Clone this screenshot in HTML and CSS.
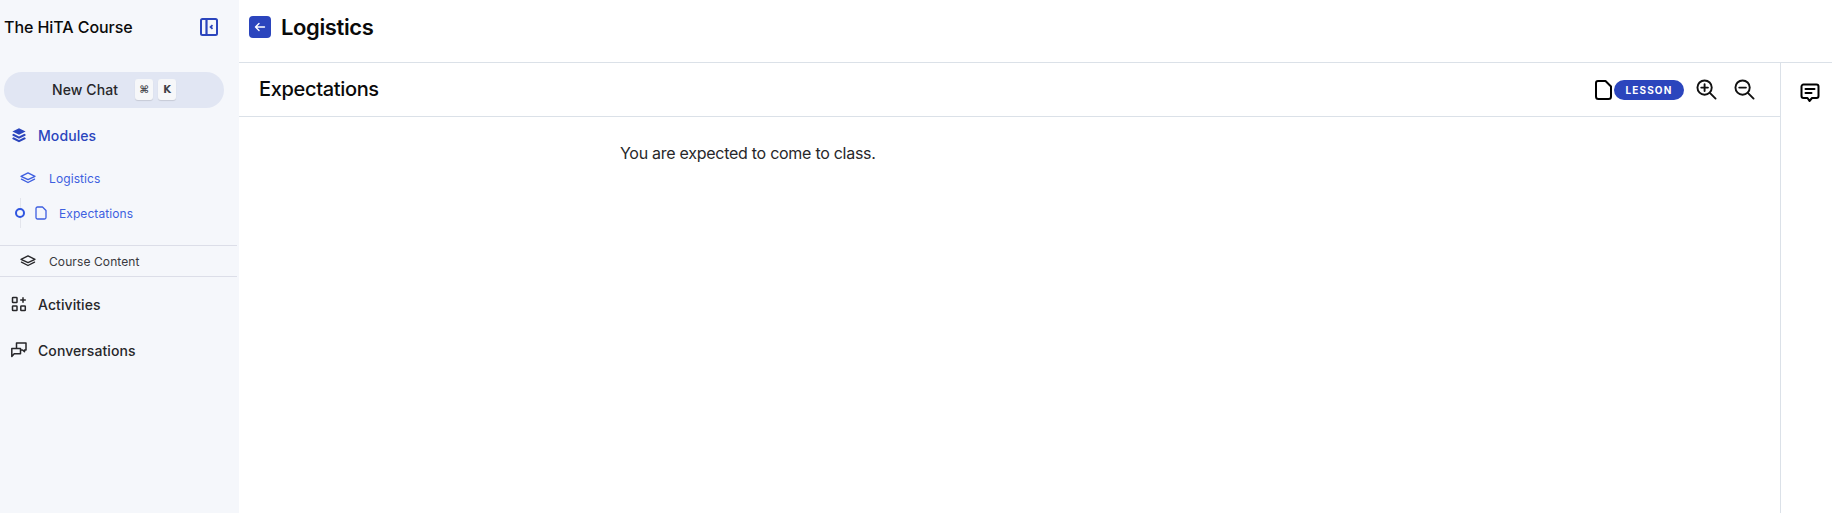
FILE: index.html
```html
<!DOCTYPE html>
<html lang="en">
<head>
<meta charset="utf-8">
<title>Logistics</title>
<link rel="stylesheet" href="styles.css">
</head>
<body>
<div class="app">
  <aside class="sidebar">
    <div class="brand">
      <span class="brand-name">The HiTA Course</span>
      <svg class="collapse" viewBox="0 0 18 18" fill="none" stroke="#2b45bd" stroke-width="2"><rect x="1" y="1" width="16" height="16" rx="1.5"/><path d="M6.5 1v16" stroke-width="2.200"/><path d="M12.500 7.200 10.600 9l1.900 1.800" stroke-width="1.800"/></svg>
    </div>
    <div class="newchat">
      <span class="newchat-label">New Chat</span>
      <kbd class="key">⌘</kbd>
      <kbd class="key">K</kbd>
    </div>
    <div class="nav-row nav-active modules">
      <svg class="nav-icon" viewBox="0 0 16 16" fill="#2b45bd"><path d="M8 1.200 14.600 4.500 8 7.800 1.400 4.500Z"/><path d="M2.600 6.800 8 9.500l5.400-2.700 1.200.7V8.500L8 11.800 1.400 8.500v-1z"/><path d="M2.600 10.300 8 13l5.400-2.700 1.200.7v1L8 15.300 1.400 12v-1z"/></svg>
      <span>Modules</span>
    </div>
    <div class="sub-row sub-active logistics">
      <svg class="sub-icon" viewBox="0 0 16 16" fill="none" stroke="#3e5fe0" stroke-width="1.200" stroke-linejoin="round" stroke-linecap="round"><path d="M8 3.500 14.200 6.500 8 9.500 1.800 6.500Z"/><path d="M2.200 9 8 12l5.800-3"/></svg>
      <span>Logistics</span>
    </div>
    <div class="lesson-row">
      <span class="ring"></span>
      <svg class="doc-small" viewBox="0 0 12 14" fill="none" stroke="#3e5fe0" stroke-width="1.300" stroke-linejoin="round"><path d="M2.500 1H7.500L11 4.500V11.500a1.500 1.500 0 0 1-1.500 1.500h-7A1.500 1.500 0 0 1 1 11.500v-9A1.500 1.500 0 0 1 2.500 1Z"/></svg>
      <span>Expectations</span>
    </div>
    <div class="sub-row course">
      <svg class="sub-icon" viewBox="0 0 16 16" fill="none" stroke="#27272a" stroke-width="1.200" stroke-linejoin="round" stroke-linecap="round"><path d="M8 3.500 14.200 6.500 8 9.500 1.800 6.500Z"/><path d="M2.200 9 8 12l5.800-3"/></svg>
      <span>Course Content</span>
    </div>
    <div class="nav-row activities">
      <svg class="nav-icon" viewBox="0 0 16 16" fill="none" stroke="#27272a" stroke-width="1.500"><rect x="1.500" y="1.500" width="4.500" height="5" rx=".6"/><rect x="1.500" y="10" width="4.500" height="4.500" rx=".6"/><rect x="9.800" y="10" width="4.500" height="4.500" rx=".6"/><path d="M12 1.200v5.600M9.200 4h5.600"/></svg>
      <span>Activities</span>
    </div>
    <div class="nav-row conversations">
      <svg class="nav-icon" viewBox="0 0 16 16" fill="none" stroke="#27272a" stroke-width="1.500" stroke-linejoin="round"><path d="M5.500 6V1H15V8H13.500V9.800L11.500 8H10"/><path d="M.8 6.500H9.500V11.800H3.200L.8 14.500Z"/></svg>
      <span>Conversations</span>
    </div>
  </aside>
  <div class="main">
    <header class="topbar">
      <span class="back">
        <svg viewBox="0 0 22 22" fill="none" stroke="#fff" stroke-width="1.400" stroke-linecap="round" stroke-linejoin="round"><path d="M15.500 11h-9M10 7.500 6.500 11l3.500 3.500"/></svg>
      </span>
      <h1 class="title">Logistics</h1>
    </header>
    <div class="workspace">
      <section class="content">
        <div class="content-head">
          <h2 class="subtitle">Expectations</h2>
          <div class="tools">
            <svg class="doc-large" viewBox="0 0 17 20" fill="none" stroke="#000" stroke-width="2" stroke-linejoin="round"><path d="M3 1H10.500L16 6.500V16.500A2.500 2.500 0 0 1 13.500 19H3.500A2.500 2.500 0 0 1 1 16.500V3A2 2 0 0 1 3 1Z"/></svg>
            <span class="badge">LESSON</span>
            <svg class="zoom zoom-in" viewBox="0 0 22 22" fill="none" stroke="#111" stroke-width="2" stroke-linecap="round"><circle cx="9" cy="9" r="7.500"/><path d="M14.500 14.500 20.500 20.500M5.500 9h7M9 5.500v7"/></svg>
            <svg class="zoom zoom-out" viewBox="0 0 22 22" fill="none" stroke="#111" stroke-width="2" stroke-linecap="round"><circle cx="9" cy="9" r="7.500"/><path d="M14.500 14.500 20.500 20.500M5.500 9h7"/></svg>
          </div>
        </div>
        <p class="body-text">You are expected to come to class.</p>
      </section>
      <aside class="rail">
        <svg class="chat" viewBox="0 0 20 20" fill="none" stroke="#000" stroke-width="2" stroke-linejoin="round" stroke-linecap="round"><path d="M3.500 1.500H16.500A2 2 0 0 1 18.500 3.500V13A2 2 0 0 1 16.500 15H12L9.500 18 7.500 15H3.500A2 2 0 0 1 1.500 13V3.500A2 2 0 0 1 3.500 1.500Z"/><path d="M5.500 6H14.500M5.500 10H11.500"/></svg>
      </aside>
    </div>
  </div>
</div>
</body>
</html>
```
FILE: styles.css
```css
* { box-sizing: border-box; }
html, body { margin: 0; height: 100%; }
body {
  font-family: Inter, "Liberation Sans", sans-serif;
  color: #111;
  background: #fff;
  overflow: hidden;
}
.app { display: flex; height: 513px; }
.sidebar {
  width: 239px;
  flex: none;
  background: #f5f7fb;
  display: flex;
  flex-direction: column;
}
.brand {
  height: 54px;
  display: flex;
  align-items: center;
  justify-content: space-between;
  padding: 0 21px 0 4px;
}
.brand-name { font-size: 16px; font-weight: 500; color: #0a0a0a; letter-spacing: -.07px; }
.collapse { width: 18px; height: 18px; }
.newchat {
  margin: 18px 15px 0 4px;
  height: 36px;
  border-radius: 18px;
  background: #e1e6f3;
  display: flex;
  align-items: center;
  padding: 0 0 1px 48px;
  gap: 5px;
}
.newchat-label { font-size: 14px; font-weight: 500; color: #27272a; margin-right: 12px; letter-spacing: .1px; }
.key {
  width: 18px;
  height: 21px;
  border-radius: 3px;
  background: #f6f7f9;
  box-shadow: 0 1px 1px rgba(0,0,0,.12);
  font-family: "DejaVu Sans", sans-serif;
  font-size: 10px;
  font-weight: 700;
  color: #3f3f46;
  display: flex;
  align-items: center;
  justify-content: center;
}
.nav-row {
  display: flex;
  align-items: center;
  font-size: 14px;
  font-weight: 500;
  letter-spacing: .08px;
  color: #27272a;
  padding-left: 11px;
  gap: 11px;
}
.nav-icon { width: 16px; height: 16px; flex: none; }
.nav-active { color: #2b45bd; }
.modules { margin-top: 18px; height: 18px; }
.sub-row {
  display: flex;
  align-items: center;
  padding-left: 19px;
  gap: 12px;
  font-size: 12px;
  letter-spacing: .1px;
}
.sub-icon { width: 18px; height: 18px; flex: none; }
.sub-active { color: #3e5fe0; }
.logistics { margin-top: 25px; height: 18px; }
.lesson-row {
  margin: 11px 0 0 20px;
  height: 30px;
  border-left: 1px solid #e3e5ec;
  display: flex;
  align-items: center;
  font-size: 12px;
  letter-spacing: .08px;
  color: #3e5fe0;
}
.ring {
  width: 10px;
  height: 10px;
  margin-left: -6px;
  border: 2px solid #2f55e0;
  border-radius: 50%;
  background: #f5f7fb;
  flex: none;
}
.doc-small { width: 12px; height: 14px; margin-left: 10px; flex: none; }
.lesson-row span:last-child { margin-left: 12px; }
.course {
  margin-top: 17px;
  height: 32px;
  width: 237px;
  border-top: 1px solid #dcdee8;
  border-bottom: 1px solid #dcdee8;
  color: #3a3a40;
}
.activities { margin-top: 18px; height: 18px; }
.conversations { margin-top: 28px; height: 18px; }
.main { flex: 1; min-width: 0; display: flex; flex-direction: column; }
.topbar {
  height: 63px;
  flex: none;
  border-bottom: 1px solid #dbe1e8;
  display: flex;
  align-items: center;
  padding: 0 0 8px 10px;
  gap: 10px;
}
.back {
  width: 22px;
  height: 22px;
  border-radius: 4px;
  background: #2b45bd;
  display: block;
}
.back svg { display: block; width: 22px; height: 22px; }
.title { margin: 0; font-size: 22px; font-weight: 600; line-height: 1; color: #0a0a0a; letter-spacing: -.017em; }
.workspace { flex: 1; display: flex; min-height: 0; }
.content { flex: 1; min-width: 0; }
.content-head {
  height: 54px;
  border-bottom: 1px solid #dbe1e8;
  display: flex;
  align-items: center;
  justify-content: space-between;
  padding: 0 25px 0 20px;
}
.subtitle { margin: 0 0 2px; font-size: 20px; font-weight: 500; color: #0a0a0a; letter-spacing: -.017em; }
.tools { display: flex; align-items: center; }
.doc-large { width: 17px; height: 20px; margin-right: 2px; }
.badge {
  margin: 0 12px 0 0;
  width: 70px;
  height: 20px;
  border-radius: 10px;
  background: #2b45bd;
  color: #fff;
  font-size: 10px;
  font-weight: 700;
  letter-spacing: 1.1px;
  display: flex;
  align-items: center;
  justify-content: center;
}
.zoom { width: 21px; height: 21px; }
.zoom-out { margin-left: 17px; }
.body-text {
  margin: 24px 0 0 381px;
  font-size: 16px;
  line-height: 24px;
  color: #27272a;
  letter-spacing: -.017em;
}
.rail {
  width: 52px;
  flex: none;
  border-left: 1px solid #dbe1e8;
  padding: 20px 0 0 19px;
}
.chat { width: 20px; height: 20px; display: block; }
```
